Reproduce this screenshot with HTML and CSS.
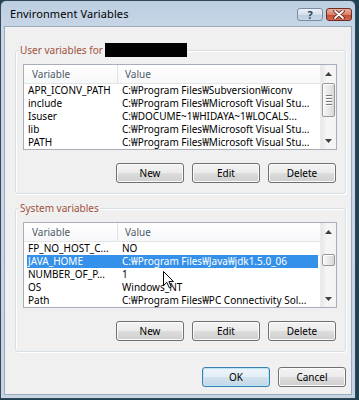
FILE: index.html
```html
<!DOCTYPE html>
<html lang="ko">
<head>
    <meta charset="UTF-8">
    <meta name="viewport" content="width=device-width, initial-scale=1.0">
    <title>Environment Variables</title>
    <link rel="stylesheet" href="styles.css">
</head>
<body>
    <div class="window">
        <div class="titlebar">
            <span class="title">Environment Variables</span>
            <div class="caption-buttons">
                <div class="cap-btn cap-help">?</div>
                <div class="cap-btn cap-close">
                    <svg width="12" height="9" viewBox="0 0 12 9">
                        <path d="M2 1 L10 8 M10 1 L2 8" stroke="#5a1e14" stroke-width="3.4" stroke-linecap="round"/>
                        <path d="M2 1 L10 8 M10 1 L2 8" stroke="#fff" stroke-width="1.8" stroke-linecap="round"/>
                    </svg>
                </div>
            </div>
        </div>

        <div class="client">
            <!-- user variables -->
            <div class="group">
                <div class="group-label">User variables for <span class="redacted"></span></div>
                <div class="list">
                    <div class="list-body">
                        <div class="list-header">
                            <div class="hcol hcol-name">Variable</div>
                            <div class="hcol hcol-value">Value</div>
                        </div>
                        <div class="row"><span class="c-name">APR_ICONV_PATH</span><span class="c-value">C:₩Program Files₩Subversion₩iconv</span></div>
                        <div class="row"><span class="c-name">include</span><span class="c-value">C:₩Program Files₩Microsoft Visual Stu...</span></div>
                        <div class="row"><span class="c-name">Isuser</span><span class="c-value">C:₩DOCUME~1₩HIDAYA~1₩LOCALS...</span></div>
                        <div class="row"><span class="c-name">lib</span><span class="c-value">C:₩Program Files₩Microsoft Visual Stu...</span></div>
                        <div class="row"><span class="c-name">PATH</span><span class="c-value">C:₩Program Files₩Microsoft Visual Stu...</span></div>
                    </div>
                    <div class="scrollbar">
                        <div class="sb-arrow">
                            <svg width="7" height="4" viewBox="0 0 7 4"><path d="M0 4 L3.5 0 L7 4 Z" fill="#404040"/></svg>
                        </div>
                        <div class="sb-track">
                            <div class="sb-thumb thumb-top">
                                <span class="grip"></span><span class="grip"></span><span class="grip"></span><span class="grip"></span>
                            </div>
                        </div>
                        <div class="sb-arrow">
                            <svg width="7" height="4" viewBox="0 0 7 4"><path d="M0 0 L3.5 4 L7 0 Z" fill="#404040"/></svg>
                        </div>
                    </div>
                </div>
                <div class="button-row">
                    <button class="btn">New</button>
                    <button class="btn">Edit</button>
                    <button class="btn">Delete</button>
                </div>
            </div>

            <!-- system variables -->
            <div class="group group-system">
                <div class="group-label">System variables</div>
                <div class="list">
                    <div class="list-body">
                        <div class="list-header">
                            <div class="hcol hcol-name">Variable</div>
                            <div class="hcol hcol-value">Value</div>
                        </div>
                        <div class="row"><span class="c-name">FP_NO_HOST_C...</span><span class="c-value">NO</span></div>
                        <div class="row selected"><span class="c-name">JAVA_HOME</span><span class="c-value">C:₩Program Files₩Java₩jdk1.5.0_06</span></div>
                        <div class="row"><span class="c-name">NUMBER_OF_P...</span><span class="c-value">1</span></div>
                        <div class="row"><span class="c-name">OS</span><span class="c-value">Windows_NT</span></div>
                        <div class="row"><span class="c-name">Path</span><span class="c-value">C:₩Program Files₩PC Connectivity Sol...</span></div>
                    </div>
                    <div class="scrollbar">
                        <div class="sb-arrow">
                            <svg width="7" height="4" viewBox="0 0 7 4"><path d="M0 4 L3.5 0 L7 4 Z" fill="#404040"/></svg>
                        </div>
                        <div class="sb-track">
                            <div class="sb-thumb thumb-mid"></div>
                        </div>
                        <div class="sb-arrow">
                            <svg width="7" height="4" viewBox="0 0 7 4"><path d="M0 0 L3.5 4 L7 0 Z" fill="#404040"/></svg>
                        </div>
                    </div>
                </div>
                <div class="button-row">
                    <button class="btn">New</button>
                    <button class="btn">Edit</button>
                    <button class="btn">Delete</button>
                </div>
            </div>

            <div class="dialog-buttons">
                <button class="btn btn-default">OK</button>
                <button class="btn">Cancel</button>
            </div>
        </div>

        <!-- mouse pointer -->
        <svg class="pointer" width="12" height="18" viewBox="0 0 12 18">
            <path d="M0.5 0.5 L0.5 14.5 L3.8 11.4 L6.3 16.8 L8.3 15.9 L5.9 10.6 L10.5 10.6 Z" fill="#fff" stroke="#000" stroke-width="1" stroke-linejoin="miter"/>
        </svg>
    </div>
</body>
</html>
```

FILE: styles.css
```css
* {
    box-sizing: border-box;
}

body {
    margin: 0;
    width: 359px;
    height: 400px;
    overflow: hidden;
    background: #1d4252;
    font-family: "Noto Sans", "DejaVu Sans", sans-serif;
    font-size: 10px;
    color: #000;
}

.window {
    position: relative;
    width: 356px;
    height: 399px;
    border: 1px solid #34485a;
    border-radius: 6px 6px 0 0;
    background: linear-gradient(#bccee2, #c9d7e7 30px, #c6d4e4);
    padding: 0 3px 3px 3px;
    display: flex;
    flex-direction: column;
}

.titlebar {
    height: 25px;
    flex: none;
    display: flex;
    align-items: center;
    padding-left: 6px;
}

.title {
    font-size: 11px;
    color: #000;
    letter-spacing: 0.1px;
}

.caption-buttons {
    margin-left: auto;
    align-self: flex-start;
    margin-top: 7px;
    display: flex;
    gap: 3px;
}

.cap-btn {
    width: 26px;
    height: 13px;
    border-radius: 3px;
    display: flex;
    align-items: center;
    justify-content: center;
}

.cap-help {
    border: 1px solid #7a8ca3;
    background: linear-gradient(#eef3f9, #d3dfec 50%, #bccddf 51%, #c9d8e8);
    color: #2d3f58;
    font-size: 11px;
    font-weight: bold;
    line-height: 11px;
}

.cap-close {
    border: 1px solid #6e2b20;
    background: linear-gradient(#eab0a2, #d9806b 50%, #c24a33 51%, #cf6a50);
}

.client {
    flex: 1;
    background: #f0f0f0;
    border: 1px solid #9aabbd;
    padding: 23px 5px 7px 10px;
}

.group {
    border: 1px solid #d5dfe5;
    border-radius: 3px;
    box-shadow: inset 1px 1px 0 #fff, 1px 1px 0 #fff;
    padding: 0 8px 10px 7px;
    height: 144px;
}

.group-system {
    margin-top: 14px;
}

.group-label {
    display: flex;
    align-items: center;
    width: fit-content;
    height: 14px;
    margin-top: -8px;
    margin-left: -4px;
    padding: 0 1px;
    background: #f0f0f0;
    color: #a0503d;
    line-height: 14px;
    white-space: pre;
}

.redacted {
    display: block;
    width: 82px;
    height: 14px;
    background: #000;
}

.list {
    margin-top: 7px;
    height: 86px;
    border: 1px solid #a7aeb7;
    background: #fff;
    display: flex;
}

.list-body {
    flex: 1;
    min-width: 0;
}

.list-header {
    height: 19px;
    display: flex;
    border-bottom: 1px solid #e5e5e5;
    background: linear-gradient(#ffffff, #f6f7f9);
    color: #4d5a68;
}

.hcol {
    line-height: 18px;
    white-space: nowrap;
}

.hcol-name {
    width: 94px;
    padding-left: 8px;
    border-right: 1px solid #dfe2e6;
}

.hcol-value {
    flex: 1;
    padding-left: 7px;
}

.row {
    height: 13px;
    line-height: 13px;
    margin: 0 2px 0 3px;
    display: flex;
    white-space: nowrap;
}

.row.selected {
    background: #3590ea;
    color: #fff;
}

.c-name {
    width: 91px;
    padding-left: 1px;
    overflow: hidden;
}

.c-value {
    flex: 1;
    padding-left: 4px;
    overflow: hidden;
}

.scrollbar {
    width: 16px;
    display: flex;
    flex-direction: column;
    background: linear-gradient(to right, #e6e6e6, #f6f6f6 40%, #f3f3f3);
    border-left: 1px solid #ececec;
}

.sb-arrow {
    height: 17px;
    display: flex;
    align-items: center;
    justify-content: center;
}

.sb-track {
    flex: 1;
}

.sb-thumb {
    margin: 0 1px;
    border: 1px solid #979797;
    border-radius: 2px;
    background: linear-gradient(to right, #f7f7f7, #e9e9e9 50%, #d8d8d8);
    box-shadow: inset 1px 1px 0 #fff;
    display: flex;
    flex-direction: column;
    align-items: center;
    justify-content: center;
    gap: 2px;
}

.thumb-top {
    margin-top: 1px;
    height: 34px;
}

.thumb-mid {
    margin-top: 14px;
    height: 12px;
}

.grip {
    width: 6px;
    height: 1px;
    background: #7a7a7a;
    box-shadow: 0 1px 0 #fff;
}

.button-row {
    margin-top: 13px;
    display: flex;
    justify-content: flex-end;
    gap: 8px;
    padding-right: 1px;
}

.btn {
    width: 68px;
    height: 20px;
    padding: 0;
    border: 1px solid #707070;
    border-radius: 3px;
    background: linear-gradient(#f3f3f3, #ebebeb 50%, #dddddd 50%, #cfcfcf);
    box-shadow: inset 0 0 0 1px #fbfbfb;
    font-family: "Noto Sans", "DejaVu Sans", sans-serif;
    font-size: 10px;
    color: #000;
    line-height: 18px;
}

.btn-default {
    border-color: #3c7fb1;
    background: linear-gradient(#eef5fa, #e2eef6 50%, #d2e2ee 50%, #c4d8e8);
    box-shadow: inset 0 0 0 1px #b9e4f8;
}

.dialog-buttons {
    margin-top: 15px;
    display: flex;
    justify-content: flex-end;
    gap: 8px;
}

.pointer {
    position: absolute;
    left: 162px;
    top: 270px;
}
```
